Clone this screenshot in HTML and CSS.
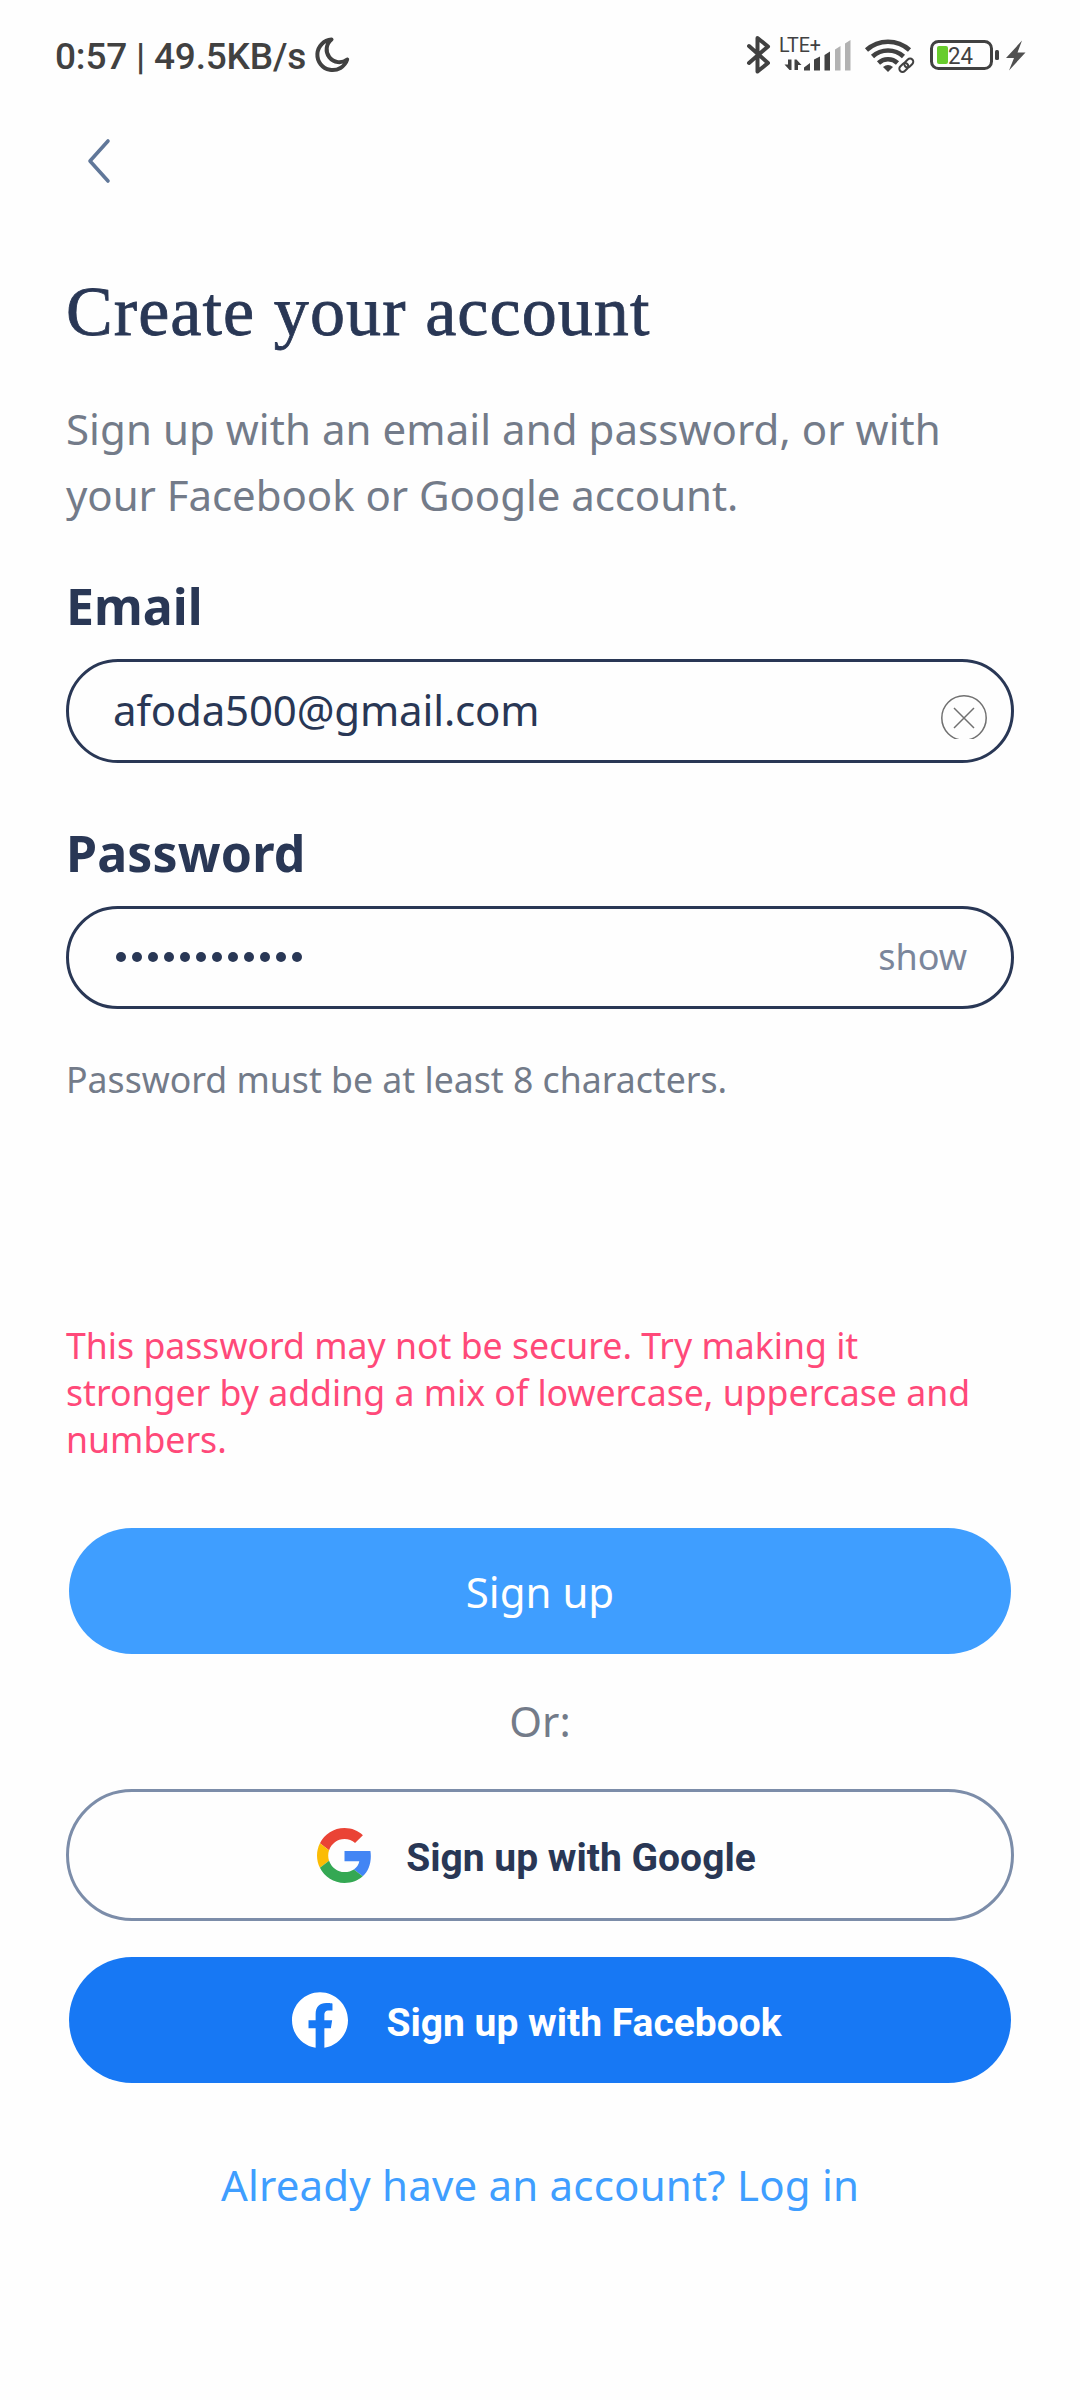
FILE: index.html
```html
<!DOCTYPE html>
<html lang="en">
<head>
<meta charset="utf-8">
<title>Create your account</title>
<link rel="stylesheet" href="styles.css">
</head>
<body>
<header class="status">
  <span class="status-text">0:57 | 49.5KB/s</span>
  <svg class="moon" width="36" height="36" viewBox="0 0 36 36"><path d="M17.5 2.5A15.3 15.3 0 1 0 33.200 22.500A12.500 12.500 0 0 1 17.500 2.500Z" fill="none" stroke="#414141" stroke-width="4" stroke-linejoin="round"/></svg>
  <svg class="tray" width="290" height="50" viewBox="740 30 290 50">
    <g fill="none" stroke="#414141" stroke-width="4" stroke-linejoin="round" stroke-linecap="round">
      <path d="M749 46L768 63L757.500 71.500V38L768 46.500L749 63"/>
    </g>
    <text x="779" y="52" class="lte" textLength="42" lengthAdjust="spacingAndGlyphs">LTE+</text>
    <g fill="#414141">
      <path d="M788 59.500h3.500v10.500h-2l-5-5.500h3.500zM794.500 59.500h2l5 5.500h-3.500v5h-3.500z"/>
      <path d="M804 70.500v-3l6-4.500v7.500zM814 70.500v-11l6-3v14zM824.500 70.500v-15.500l5.500-3.500v19z"/>
      <path fill="#b2b2b2" d="M835 70.500v-21l5.500-3.500v24.500zM845 70.500v-27l5.500-3.500v30.500z"/>
    </g>
    <g fill="none" stroke="#414141" stroke-width="4.600">
      <path d="M866.500 50a32 32 0 0 1 43 0"/><path d="M872.500 56.500a23 23 0 0 1 31 0"/><path d="M878.500 63a14 14 0 0 1 19 0"/>
    </g>
    <path fill="#414141" d="M883 67q5-4 10 0l-5 5z"/>
    <g fill="none" stroke="#414141" stroke-width="2"><rect x="-5" y="-3.200" width="10" height="6.400" rx="3.200" transform="translate(903.800 67.500) rotate(-45)"/><rect x="-5" y="-3.200" width="10" height="6.400" rx="3.200" transform="translate(908.800 63) rotate(-45)"/></g>
    <rect x="931.500" y="41.500" width="60" height="27" rx="7" fill="none" stroke="#414141" stroke-width="3"/>
    <rect x="937" y="46" width="11" height="18" rx="2" fill="#68cc2c"/>
    <text x="948" y="63.500" class="level" textLength="25" lengthAdjust="spacingAndGlyphs">24</text>
    <rect x="995" y="50" width="4" height="10" rx="1.500" fill="#414141"/>
    <path fill="#505050" d="M1022 40.500l-16 17.500h8l-5 12.500l16.500-18h-8z"/>
  </svg>
</header>
<nav class="nav">
  <svg width="26" height="48" viewBox="0 0 26 48"><path d="M22 4L4 24L22 44" fill="none" stroke="#607799" stroke-width="3.600" stroke-linecap="round" stroke-linejoin="round"/></svg>
</nav>
<main class="page">
  <h1 class="title">Create your account</h1>
  <p class="intro">Sign up with an email and password, or with<br><span class="intro-second">your Facebook or Google account.</span></p>
  <div class="label">Email</div>
  <div class="field">
    <span class="value">afoda500@gmail.com</span>
    <svg class="clear" width="46" height="44" viewBox="0 0 46 44"><g fill="none" stroke="#707070" stroke-width="1.500"><circle cx="23" cy="23" r="22.200"/><path d="M13 13L33 33M33 13L13 33"/></g></svg>
  </div>
  <div class="label label-password">Password</div>
  <div class="field">
    <span class="dots"><i></i><i></i><i></i><i></i><i></i><i></i><i></i><i></i><i></i><i></i><i></i><i></i></span>
    <span class="show">show</span>
  </div>
  <p class="hint">Password must be at least 8 characters.</p>
  <p class="error">This password may not be secure. Try making it<br>stronger by adding a mix of lowercase, uppercase and numbers.</p>
  <div class="button primary">Sign up</div>
  <p class="or">Or:</p>
  <div class="button google">
    <svg class="google-logo" width="55" height="55" viewBox="0 0 48 48"><path fill="#ea4335" d="M24 9.500c3.540 0 6.710 1.220 9.210 3.600l6.850-6.850C35.900 2.380 30.470 0 24 0 14.620 0 6.510 5.380 2.560 13.220l7.980 6.190C12.430 13.720 17.740 9.500 24 9.500z"/><path fill="#4285f4" d="M46.980 24.550c0-1.570-.15-3.090-.38-4.550H24v9.020h12.940c-.58 2.960-2.260 5.480-4.780 7.180l7.730 6c4.510-4.180 7.090-10.360 7.090-17.650z"/><path fill="#fbbc05" d="M10.530 28.590c-.48-1.450-.76-2.990-.76-4.590s.27-3.140.76-4.590l-7.980-6.190C.92 16.460 0 20.120 0 24c0 3.880.92 7.540 2.560 10.780l7.970-6.190z"/><path fill="#34a853" d="M24 48c6.480 0 11.930-2.130 15.890-5.810l-7.730-6c-2.150 1.450-4.920 2.300-8.160 2.300-6.260 0-11.570-4.220-13.470-9.910l-7.980 6.190C6.510 42.620 14.620 48 24 48z"/></svg>
    <span class="social-text google-text">Sign up with Google</span>
  </div>
  <div class="button facebook">
    <svg width="56" height="56" viewBox="0 0 24 24"><path fill="#fff" d="M24 12.073c0-6.627-5.373-12-12-12s-12 5.373-12 12c0 5.990 4.388 10.954 10.125 11.854v-8.385H7.078v-3.470h3.047V9.430c0-3.007 1.792-4.669 4.533-4.669 1.312 0 2.686.235 2.686.235v2.953H15.830c-1.491 0-1.956.925-1.956 1.874v2.250h3.328l-.532 3.470h-2.796v8.385C19.612 23.027 24 18.062 24 12.073z"/></svg>
    <span class="social-text facebook-text">Sign up with Facebook</span>
  </div>
  <p class="login">Already have an account? Log in</p>
</main>
</body>
</html>
```
FILE: styles.css
```css
* { box-sizing: border-box; }
body { margin: 0; width: 1080px; height: 2400px; background: #fefefe; color: #293755; font-family: "Noto Sans", sans-serif; }
svg { display: block; flex: none; }
p, h1 { margin: 0; }
.status { display: flex; align-items: flex-start; height: 110px; padding: 30px 50px 0 55px; }
.status-text { width: 255px; padding-top: 1px; font: 500 37px/52px Roboto, sans-serif; letter-spacing: -0.2px; color: #414141; white-space: nowrap; }
.moon { margin: 7px 0 0 4px; }
.tray { margin-left: auto; }
.lte { font: 400 20px Roboto, sans-serif; fill: #414141; }
.level { font: 400 23px Roboto, sans-serif; fill: #414141; }
.nav { height: 150px; padding: 27px 0 0 86px; }
.page { padding: 0 66px; }
.title { height: 136px; padding-top: 12px; font: 400 70px/80px "Liberation Serif", serif; letter-spacing: 1.1px; -webkit-text-stroke: 0.8px #293755; white-space: nowrap; }
.intro { height: 169px; font-size: 42px; line-height: 66px; letter-spacing: 0.06px; color: #737b89; white-space: nowrap; }
.intro-second { letter-spacing: -0.06px; }
.label { height: 94px; padding-top: 7px; font-size: 50px; line-height: 68px; font-weight: 700; }
.label-password { margin-top: 49px; height: 94px; letter-spacing: 0.15px; }
.field { display: flex; align-items: center; justify-content: space-between; height: 104px; padding: 0 24px 2px 44px; border: 3px solid #293755; border-radius: 52px; }
.label-password + .field { height: 103px; }
.value { font-size: 42px; line-height: 58px; letter-spacing: -0.15px; }
.clear { margin-top: 14px; }
.dots { display: flex; gap: 6px; padding-left: 3px; }
.dots i { width: 10px; height: 10px; border-radius: 5px; background: #293755; }
.show { padding-right: 20px; font-size: 36px; color: #7b869b; }
.hint { height: 255px; padding-top: 47px; font-size: 35.650px; line-height: 47px; color: #737b89; }
.error { height: 264px; padding-top: 58px; font-size: 35.650px; line-height: 47px; color: #ff4979; }
.button { display: flex; align-items: center; justify-content: center; height: 132px; border-radius: 66px; }
.primary { height: 126px; margin: 0 3px; background: #3f9eff; color: #fff; font-size: 42px; }
.or { height: 135px; padding-top: 38px; text-align: center; font-size: 42px; line-height: 58px; color: #737b89; }
.google { border: 3px solid #7c8da9; padding-right: 7px; }
.facebook { height: 126px; margin: 36px 3px 0; padding-right: 6px; background: #1778f4; color: #fff; }
.social-text { font: 700 39px/50px Roboto, sans-serif; padding-top: 6px; white-space: nowrap; }
.google-text { margin-left: 34px; }
.facebook-text { margin-left: 38px; }
.login { padding-top: 73px; text-align: center; font-size: 42px; line-height: 58px; letter-spacing: 0.2px; color: #3f9eff; }
```
